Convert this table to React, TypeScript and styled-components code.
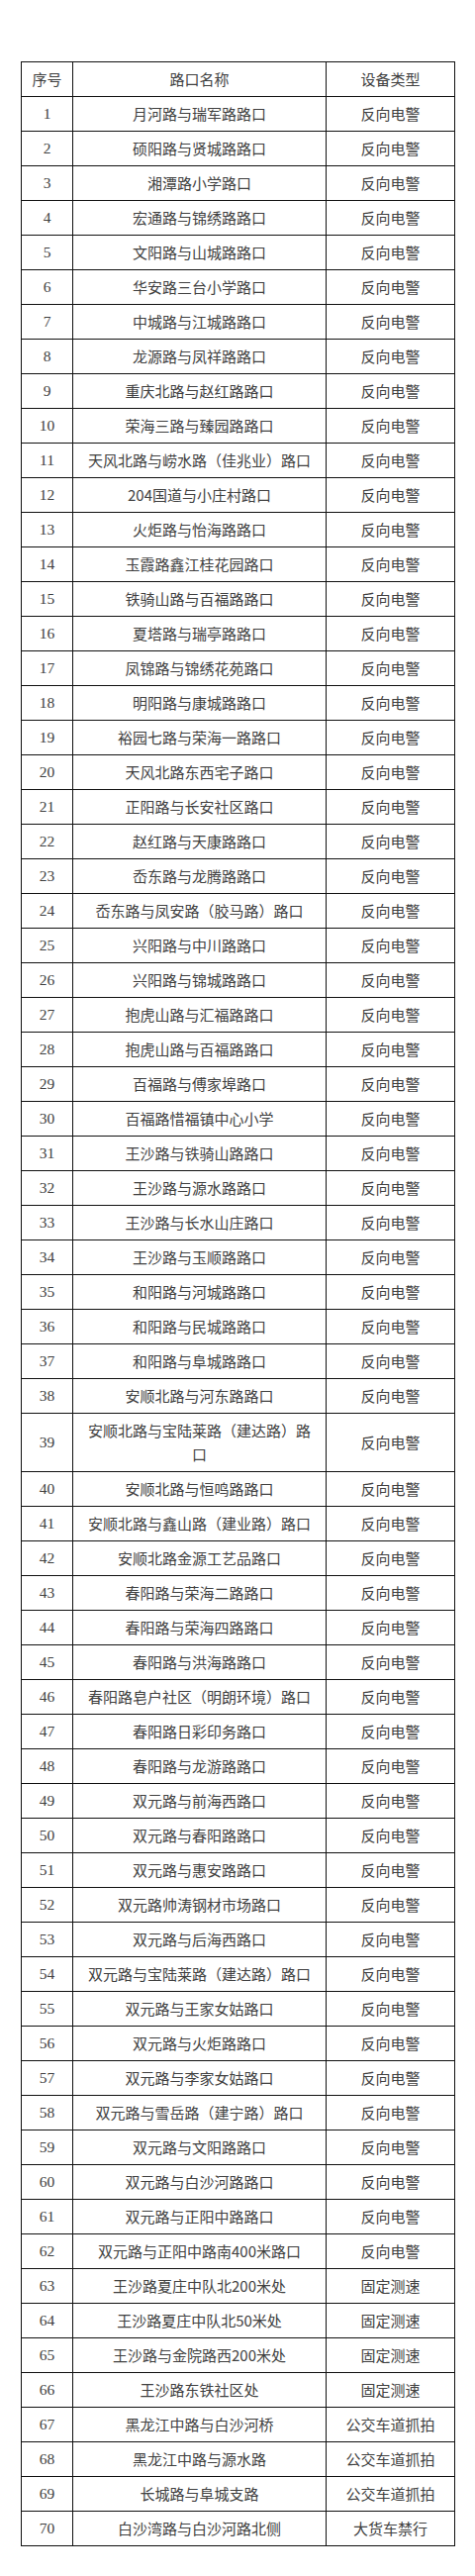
import React from 'react';
import styled, { createGlobalStyle } from 'styled-components';

const GlobalStyle = createGlobalStyle`
  html, body {
    margin: 0;
    padding: 0;
    background: #ffffff;
  }
  body {
    font-family: "Noto Sans CJK SC", "Noto Sans", sans-serif;
  }
`

const Page = styled.div`
  width: 480px;
  min-height: 2602px;
  padding: 62px 0 0 21px;
  box-sizing: border-box;
  background: #ffffff;
`

const Table = styled.div`
  width: 439px;
  box-sizing: border-box;
  border-top: 1px solid #111111;
  border-left: 1px solid #111111;
  color: #404040;
  font-size: 15px;
`

const Row = styled.div`
  display: grid;
  grid-template-columns: 52px 256px 130px;
`

const Cell = styled.div<{ $serif?: boolean }>`
  display: flex;
  align-items: center;
  justify-content: center;
  box-sizing: border-box;
  min-height: 35px;
  padding: 5px 10px;
  border-right: 1px solid #111111;
  border-bottom: 1px solid #111111;
  line-height: 24px;
  text-align: center;
  font-family: ${({ $serif }) =>
    $serif ? '"Liberation Serif", "Noto Sans CJK SC", serif' : '"Noto Sans CJK SC", sans-serif'};
  font-size: ${({ $serif }) => ($serif ? '15.5px' : '15px')};
  font-weight: 400;
`

type Entry = [string, string];

const rows: Entry[] = [
  ['月河路与瑞军路路口', '反向电警'],
  ['硕阳路与贤城路路口', '反向电警'],
  ['湘潭路小学路口', '反向电警'],
  ['宏通路与锦绣路路口', '反向电警'],
  ['文阳路与山城路路口', '反向电警'],
  ['华安路三台小学路口', '反向电警'],
  ['中城路与江城路路口', '反向电警'],
  ['龙源路与凤祥路路口', '反向电警'],
  ['重庆北路与赵红路路口', '反向电警'],
  ['荣海三路与臻园路路口', '反向电警'],
  ['天风北路与崂水路（佳兆业）路口', '反向电警'],
  ['204国道与小庄村路口', '反向电警'],
  ['火炬路与怡海路路口', '反向电警'],
  ['玉霞路鑫江桂花园路口', '反向电警'],
  ['铁骑山路与百福路路口', '反向电警'],
  ['夏塔路与瑞亭路路口', '反向电警'],
  ['凤锦路与锦绣花苑路口', '反向电警'],
  ['明阳路与康城路路口', '反向电警'],
  ['裕园七路与荣海一路路口', '反向电警'],
  ['天风北路东西宅子路口', '反向电警'],
  ['正阳路与长安社区路口', '反向电警'],
  ['赵红路与天康路路口', '反向电警'],
  ['岙东路与龙腾路路口', '反向电警'],
  ['岙东路与凤安路（胶马路）路口', '反向电警'],
  ['兴阳路与中川路路口', '反向电警'],
  ['兴阳路与锦城路路口', '反向电警'],
  ['抱虎山路与汇福路路口', '反向电警'],
  ['抱虎山路与百福路路口', '反向电警'],
  ['百福路与傅家埠路口', '反向电警'],
  ['百福路惜福镇中心小学', '反向电警'],
  ['王沙路与铁骑山路路口', '反向电警'],
  ['王沙路与源水路路口', '反向电警'],
  ['王沙路与长水山庄路口', '反向电警'],
  ['王沙路与玉顺路路口', '反向电警'],
  ['和阳路与河城路路口', '反向电警'],
  ['和阳路与民城路路口', '反向电警'],
  ['和阳路与阜城路路口', '反向电警'],
  ['安顺北路与河东路路口', '反向电警'],
  ['安顺北路与宝陆莱路（建达路）路口', '反向电警'],
  ['安顺北路与恒鸣路路口', '反向电警'],
  ['安顺北路与鑫山路（建业路）路口', '反向电警'],
  ['安顺北路金源工艺品路口', '反向电警'],
  ['春阳路与荣海二路路口', '反向电警'],
  ['春阳路与荣海四路路口', '反向电警'],
  ['春阳路与洪海路路口', '反向电警'],
  ['春阳路皂户社区（明朗环境）路口', '反向电警'],
  ['春阳路日彩印务路口', '反向电警'],
  ['春阳路与龙游路路口', '反向电警'],
  ['双元路与前海西路口', '反向电警'],
  ['双元路与春阳路路口', '反向电警'],
  ['双元路与惠安路路口', '反向电警'],
  ['双元路帅涛钢材市场路口', '反向电警'],
  ['双元路与后海西路口', '反向电警'],
  ['双元路与宝陆莱路（建达路）路口', '反向电警'],
  ['双元路与王家女姑路口', '反向电警'],
  ['双元路与火炬路路口', '反向电警'],
  ['双元路与李家女姑路口', '反向电警'],
  ['双元路与雪岳路（建宁路）路口', '反向电警'],
  ['双元路与文阳路路口', '反向电警'],
  ['双元路与白沙河路路口', '反向电警'],
  ['双元路与正阳中路路口', '反向电警'],
  ['双元路与正阳中路南400米路口', '反向电警'],
  ['王沙路夏庄中队北200米处', '固定测速'],
  ['王沙路夏庄中队北50米处', '固定测速'],
  ['王沙路与金院路西200米处', '固定测速'],
  ['王沙路东铁社区处', '固定测速'],
  ['黑龙江中路与白沙河桥', '公交车道抓拍'],
  ['黑龙江中路与源水路', '公交车道抓拍'],
  ['长城路与阜城支路', '公交车道抓拍'],
  ['白沙湾路与白沙河路北侧', '大货车禁行'],
];

const App = () => {
  return (
    <Page>
      <GlobalStyle />
      <Table>
        <Row>
          <Cell>序号</Cell>
          <Cell>路口名称</Cell>
          <Cell>设备类型</Cell>
        </Row>
        {rows.map(([name, kind], i) => (
          <Row key={i}>
            <Cell $serif>{i + 1}</Cell>
            <Cell>{name}</Cell>
            <Cell>{kind}</Cell>
          </Row>
        ))}
      </Table>
    </Page>
  );
}

export default App;
